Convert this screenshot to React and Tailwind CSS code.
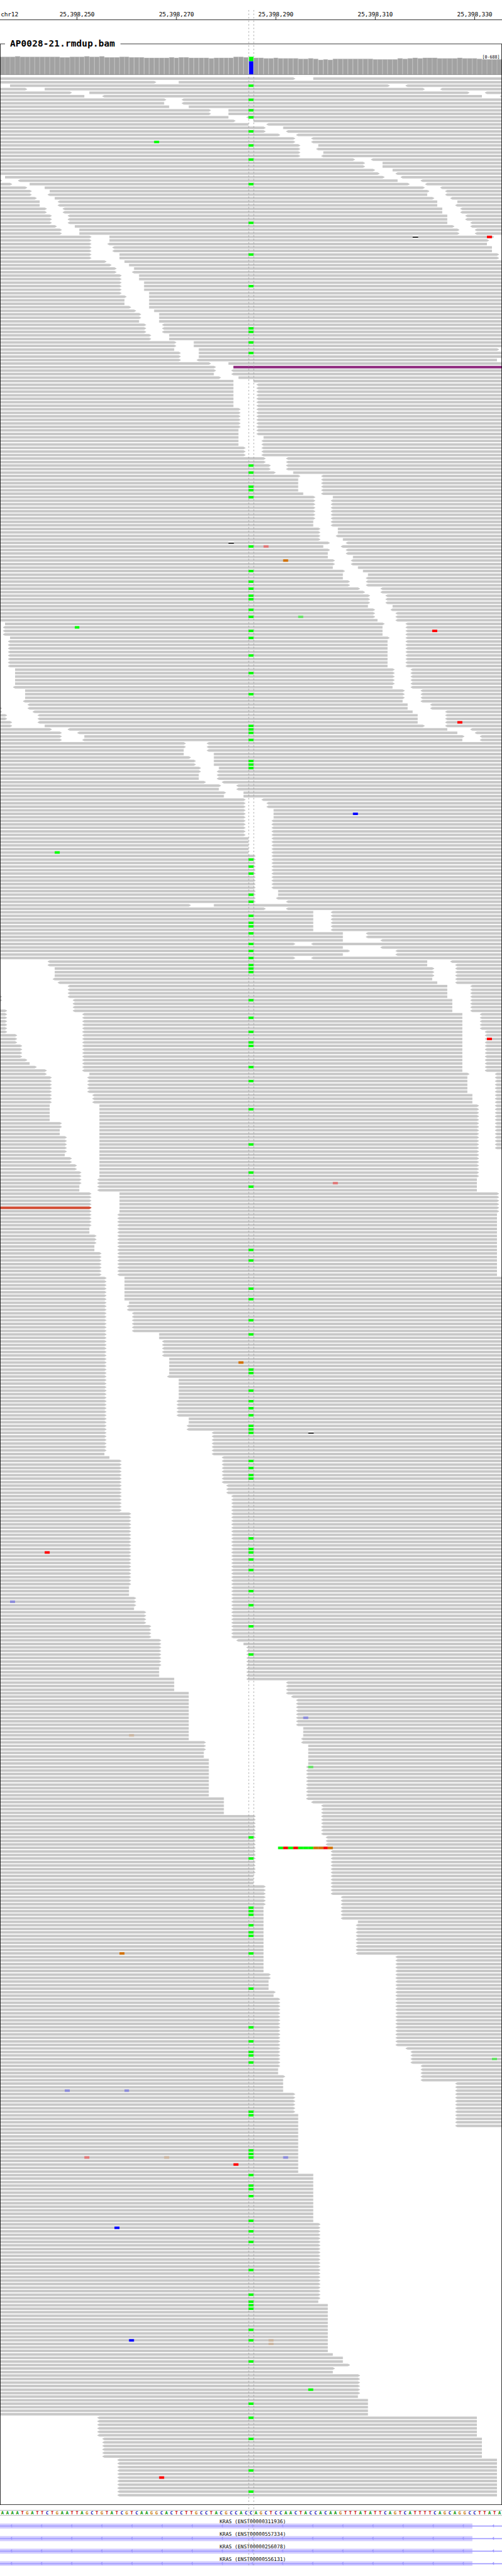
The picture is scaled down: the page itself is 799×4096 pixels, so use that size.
import React from "react";

/* The view is laid out in genome-viewer units: 1000 wide, 101 bases across. */
const VIEW_W = 1000;
const UNIT = 0.799;
const BASES = 101;
const edge = (base) => Math.round((base * VIEW_W) / BASES);

const GREY = "#c8c8c8";
const GREEN = "#00ff00";
const RED = "#ff0000";
const BLUE = "#0000ff";
const ORANGE = "#d17105";
const FAINT_RED = "#e07878";
const FAINT_GREEN = "#64e364";
const FAINT_BLUE = "#8c8cdb";
const FAINT_ORANGE = "#cab5a1";

/* Each line: gaps of a row (base, ">" = forward tip, "<" = reverse tip), and how many rows repeat it. */
const ROWS = `
59>-63
31>-36
0-2 78>-<82
5>-9 85>-<89
14>-18 94>-<98
17-<21 97-<101
33>-<37
33-<37
34-38
42>-46|2
46-<50
47>-51
50-<54
53>-57
53>-<58
56>-<60
59>-<63|2
60>-64
60>-<64
60>-65
60>-<65
71>-<75
73>-77|2
75>-79
76>-<80
0-1 77>-<81
0>-<4 80-<85
2>-6 82>-<86
5>-9 85>-<89
6>-10 86>-<90
6>-<10 86-<90
7>-11 87>-<91
8-<12 88-92
8-<12 88-<92
9>-<13 89-<93|2
10>-<14 90-<94|2
10>-<14 90-<95
11>-15 91>-<95
12>-16 92>-<96|2
18>-22 99>-101
18>-22 98>-101
18>-<22 98-101
18>-<23 99-101|2
18>-24 100>-101|2
21>-25
22>-26
23>-27
23>-<27
24>-28|2
24>-29|3
24>-30
25>-30
25-30|2
26>-30
27>-31
28>-32|2
28-32
29>-<33|3
30>-34|2
35>-39|2
35-40 100>-101
36>-40|2
36>-<40 100-101
42>-46
43>-47
43>-<47
43-<47
44>-48
47-51
47-<52|7
48>-<52|6
48-<52|2
48-53
48-<53|2
49>-<53|3
53>-<58|2
54>-<58|2
55>-59
60>-<65
60-<65|4
61-<65
63>-67
63>-<67|6
63-<67|2
64>-68|2
64>-<68
64>-69
66>-<70
65-<69
66>-<70
66-<70
66-71
67>-<71|2
67-72
69>-73
69-74
69-<74
70>-<74|2
72>-<77
73>-<77
74>-<78|3
74-79
75>-<79
75>-<80|2
76-<80
0-1 77>-<82
0-<1 77-<82|3
0-2 78>-<82
0-<2 78-<82|8
0-3 79>-<83|5
0-<3 79-<83
0-5 81>-<85|3
0-<5 81-<85
0-<6 82-<87
0>-<6 82-<87
0>-<7 83-<90
1>-<8 84-<90|2
2>-<8 84-<90
2>-9 85>-<90
10>-<14 90-<95
12>-<16 92-<96
12>-17 93>-<97
12>-<17 93-<97
37>-<42|2
37-<42
37-43
38>-43
39>-43|2
40>-44
40>-<44
40-<44|2
41>-<45
44>-<48
44-<48
45>-49
45-49
49>-<53
49>-<54|2
49>-55|3
49>-<55|5
50-<55|5
51>-<55|10
51>-56|2
51>-<56
51>-<58
38>-43
53>-<58
63-<67|6
69-<74|2
69-<77
59>-<63
69-<77
70>-<80
69-<80
59>-<63
0-<10 86-<91
0-<10 86-<92
0-11 87>-<92|3
0-<11 87-<92
0-<12 88-<92
0-<14 90-<95|3
0>-<14 90-<95
0>-<15 91-<95
0-<15 91-<95|2
1>-<15 91-<95
1>-<17 93-<97|5
1>-<17 93-<98
3>-<17 93-<98|3
4>-<17 93-<98|4
5>-<17 93-<98
6-<17 93-<98
7>-<17 93-<98
9>-<17 93-<98
9>-18 94>-<100
10>-<18 94-<100|5
10>-<19 95-<100|3
10-20 96>-<100|5
12>-20 96>-<100|2
12-20 96>-<100|2
13>-20 96>-<100|4
13>-20 96>-101
13-20 96>-101
14>-20 96>-101|2
15>-20 96>-101|2
16>-20 96>-101|2
16>-<20 96-101|2
16-<20 96-101|2
18>-24 100>-101|6
18>-<24 100-101|4
18-<24 100-101|2
19>-<24 100-101|3
19-<24 100-101|2
20>-<24 100-101|7
21>-25|7
21>-26
21>-<26|2
21>-<27|6
21>-32|2
21>-<33|5
21>-34|5
21>-<34
21>-36|6
21>-<36|5
21>-38|2
21>-<38|2
21>-<43|6
21-<43
22-<45
24>-<45|7
24>-<46|3
24>-<47|5
26>-<47|21
26-<47|3
27>-<47|3
27-<47
29>-<47|4
30>-<47|4
32>-<48
32>-49
32>-<50|6
32-<50|3
35-<50
35-<58|3
38-<58
38-<59
38-<60|8
38-61|3
38-<61
41>-<61
41>-62|2
41-62|2
42-62|2
42-<62|9
45-<62
45-<63
45-<65|3
51>-<65|6
51>-<66|3
51>-56
51>-<67|7
51-<67|3
53>-<67|3
53>-<69|3
53-<69|4
53-72
53-<72|9
53-<80|5
54>-<80|2
54-<80|3
55>-<80
55-<80
56>-<80|14
56>-<82
56>-<83|4
56>-<85
56-<85|2
57>-<85
57-<85
57-<92|3
59>-<92|6
60-<92|4
60-101|13
63-101|14
64>-101|22
64-101
66-101|14
67-101
69-101|2
70>-101
67>-101
67-101
72>-101|6
72-101
74-101|5
0-<20 96-101|6
0-<21 97-101|6
0-<24 100-101|11
`
  .trim()
  .split("\n")
  .flatMap((line) => {
    const [gaps, n] = line.split("|");
    return Array(Number(n || 1)).fill(gaps);
  });

/* Rows carrying the variant at the centre base. */
const VARIANT_ROWS = [
  2, 6, 9, 11, 15, 19, 23, 30, 41, 50, 59, 71, 72, 75, 78, 110, 112, 116, 117, 119, 133, 140, 143, 145, 147, 148,
  151, 153, 157, 159, 164, 169, 175, 184, 185, 186, 188, 194, 195, 196, 222, 224, 226, 232, 234, 238, 240, 241, 243,
  246, 248, 250, 252, 253, 254, 262, 267, 271, 274, 275, 281, 285, 293, 303, 311, 315, 333, 336, 344, 347, 353, 357,
  367, 368, 373, 376, 378, 380, 383, 384, 385, 393, 395, 397, 398, 415, 418, 419, 421, 424, 430, 434, 440, 448, 500,
  506, 520, 521, 522, 525, 527, 528, 533, 543, 554, 558, 561, 562, 564, 578, 579, 589, 590, 591, 596, 599, 600, 602,
  609, 612, 615, 623, 630, 632, 633, 634, 640, 643, 649, 661, 665, 671, 680, 686,
];

/* [row, base, colour] */
const MISMATCHES = [
  [18, 31, GREEN], [45, 98, RED], [133, 53, FAINT_RED], [137, 57, ORANGE], [153, 60, FAINT_GREEN], [156, 15, GREEN],
  [157, 87, RED], [183, 92, RED], [209, 71, BLUE], [220, 11, GREEN], [273, 98, RED], [314, 67, FAINT_RED],
  [365, 48, ORANGE], [419, 9, RED], [433, 2, FAINT_BLUE], [466, 61, FAINT_BLUE], [471, 26, FAINT_ORANGE],
  [480, 62, FAINT_GREEN], [503, 56, GREEN], [503, 57, RED], [503, 58, GREEN], [503, 59, RED], [503, 60, GREEN],
  [503, 61, GREEN], [503, 62, GREEN], [503, 63, ORANGE], [503, 64, ORANGE], [503, 65, RED], [503, 66, ORANGE],
  [533, 24, ORANGE], [563, 99, FAINT_GREEN], [572, 13, FAINT_BLUE], [572, 25, FAINT_BLUE], [591, 17, FAINT_RED],
  [591, 33, FAINT_ORANGE], [591, 57, FAINT_BLUE], [593, 47, RED], [611, 23, BLUE], [643, 26, BLUE],
  [643, 54, FAINT_ORANGE], [644, 54, FAINT_ORANGE], [657, 62, GREEN], [682, 32, RED],
];

const DELETIONS = [[45, 83], [132, 46], [385, 62]];

/* [row, index of the read within its row, colour] */
const TINTED = [[82, 1, "#8f2a7f"], [321, 0, "#d44d35"]];

/* Top of every coverage column: [columns, y] */
const COVERAGE = [
  [3, 113], [1, 112], [8, 113], [2, 114], [3, 113], [1, 112], [2, 113], [1, 112], [3, 114], [2, 113], [3, 114],
  [5, 115], [1, 114], [1, 115], [2, 114], [4, 115], [1, 116], [4, 115], [2, 113], [1, 114], [1, 113], [2, 115],
  [2, 116], [1, 115], [4, 116], [2, 117], [1, 116], [1, 117], [1, 119], [1, 118], [1, 119], [8, 117], [5, 118],
  [1, 116], [1, 117], [1, 116], [1, 115], [1, 116], [3, 115], [4, 116], [1, 115], [3, 116], [1, 117], [4, 118],
].flatMap(([n, y]) => Array(n).fill(y));

const SEQUENCE =
  "AAAATGATTCTGAATTAGCTGTATCGTCAAGGCACTCTTGCCTACGCCACCAGCTCCAACTACCACAAGTTTATATTCAGTCATTTTCAGCAGGCCTTATA";
const BASE_COLOURS = { A: "#009600", C: "#0000b4", G: "#c87800", T: "#c80000" };

const TRANSCRIPTS = ["ENST00000311936", "ENST00000557334", "ENST00000256078", "ENST00000556131"];

const ROW_TOP = 154;
const ROW_PITCH = 7;
const rowY = (row) => ROW_TOP + row * ROW_PITCH;

function readsOf(gaps) {
  const reads = [];
  let start = { base: 0, tip: false };
  const close = (base, tip) => {
    if (base > start.base || tip || start.tip) reads.push({ from: start, to: { base, tip } });
  };
  gaps.split(" ").forEach((gap) => {
    const [, a, fwd, rev, b] = gap.match(/^(\d+)(>?)-(<?)(\d+)$/);
    close(Number(a), fwd === ">");
    start = { base: Number(b), tip: rev === "<" };
  });
  close(BASES, false);
  return reads;
}

function readPath({ from, to }, y) {
  const x1 = edge(from.base);
  const x2 = edge(to.base);
  const left = from.tip ? `L${x1} ${y + 5}L${x1 - 4} ${y + 3}V${y + 2}Z` : `L${x1} ${y + 5}Z`;
  const right = to.tip ? `L${x2} ${y}L${x2 + 4} ${y + 2}V${y + 3}L${x2} ${y + 5}` : `L${x2} ${y}V${y + 5}`;
  return `M${x1} ${y}${right}${left}`;
}

/* One horizontal band of the page; its drawing uses page units. */
function Track({ top, height, children }) {
  return (
    <svg
      className="block w-full shrink-0"
      style={{ height }}
      viewBox={`0 ${top / UNIT} ${VIEW_W} ${height / UNIT}`}
      preserveAspectRatio="none"
    >
      {children}
    </svg>
  );
}

function Ruler() {
  return (
    <Track top={0} height={56}>
      <g className="font-['DejaVu_Sans_Mono',monospace] text-[12px]" fill="#000">
        <text x="1.5" y="32" textLength="35">chr12</text>
        {[250, 270, 290, 310, 330].map((n, i) => (
          <text key={n} x={118.5 + i * 198.02} y="32" textLength="70">{`25,398,${n}`}</text>
        ))}
      </g>
      {[0, 1, 2, 3, 4].map((i) => (
        <rect key={i} x={Math.floor(153.5 + i * 198.02)} y="32" width="1" height="7" />
      ))}
      <rect x="0" y="39" width="1000" height="1" />
    </Track>
  );
}

function Coverage() {
  return (
    <g>
      {COVERAGE.map((y, i) => {
        const x = edge(i);
        const w = edge(i + 1) - x;
        if (i === 50) {
          return (
            <g key={i}>
              <rect x={x} y={y} width={w} height={148 - y} fill="#e4e4e4" />
              <rect x={x + 1} y={y} width={w - 1} height={122 - y} fill={GREEN} />
              <rect x={x + 1} y="122" width={w - 1} height="26" fill={BLUE} />
            </g>
          );
        }
        return (
          <g key={i}>
            <rect x={x} y={y} width={w} height={148 - y} fill="#b2b2b2" />
            <rect x={x + 1} y={y + 1} width={w - 2} height={147 - y} fill="#a2a2a2" />
          </g>
        );
      })}
      <rect x="0" y="148" width="1000" height="1" fill="#777" />
      <text className="font-['DejaVu_Sans_Mono',monospace] text-[9px]" x="960.5" y="117" textLength="35" lengthAdjust="spacingAndGlyphs">
        [0-688]
      </text>
    </g>
  );
}

function Alignments() {
  const parsed = ROWS.map(readsOf);
  const grey = parsed.map((reads, row) => reads.map((r) => readPath(r, rowY(row))).join("")).join("");
  const square = (base) => ({ x: edge(base), width: edge(base + 1) - edge(base) });
  return (
    <g>
      <path d={grey} fill={GREY} />
      {TINTED.map(([row, i, colour]) => (
        <path key={row} d={readPath(parsed[row][i], rowY(row))} fill={colour} />
      ))}
      {VARIANT_ROWS.map((row) => (
        <rect key={row} {...square(50)} y={rowY(row)} height="5" fill={GREEN} />
      ))}
      {MISMATCHES.map(([row, base, colour]) => (
        <rect key={`${row}-${base}`} {...square(base)} y={rowY(row)} height="5" fill={colour} />
      ))}
      {DELETIONS.map(([row, base]) => (
        <g key={row}>
          <rect x={edge(base)} y={rowY(row)} width="11" height="5" fill="#fff" />
          <rect x={edge(base)} y={rowY(row) + 2} width="11" height="2" fill="#000" />
        </g>
      ))}
    </g>
  );
}

function AlignmentPanel() {
  return (
    <Track top={56} height={3932}>
      <Coverage />
      <Alignments />
      <path d="M0 87H10V88H1V4984H999V88H240V87H1000V4985H0Z" fill="#000" />
      <text className="font-['DejaVu_Sans_Mono',monospace] text-[18px] font-bold" x="20" y="92" textLength="209">
        AP0028-21.rmdup.bam
      </text>
    </Track>
  );
}

function Sequence() {
  return (
    <Track top={3988} height={14}>
      <rect x="0" y="4995" width="1000" height="1" fill="#aaa" />
      <rect x="0" y="5005" width="1000" height="1" fill="#aaa" />
      <g className="font-['DejaVu_Sans_Mono',monospace] text-[9px] font-bold" textAnchor="middle">
        {[...SEQUENCE].map((base, i) => (
          <text key={i} x={((i + 0.5) * VIEW_W) / BASES} y="5004" fill={BASE_COLOURS[base]}>
            {base}
          </text>
        ))}
      </g>
    </Track>
  );
}

function Transcripts() {
  return (
    <Track top={4002} height={94}>
      {TRANSCRIPTS.map((id, i) => {
        const y = 5022 + i * 25;
        return (
          <g key={id}>
            <rect x="0" y={y} width="941" height={i === 3 ? 9 : 10} fill="#d2ccff" />
            <rect x="0" y={y + 4} width="1000" height="2" fill="#9c96ff" />
            {Array.from({ length: 17 }, (_, k) => (
              <path key={k} d={`M${20.5 + k * 60} ${y + 4.5}l3.5 -3.5v7z`} fill="#9c96ff" />
            ))}
            <text className="font-['DejaVu_Sans_Mono',monospace] text-[10px]" x="437.5" y={y - 1} textLength="132">
              {`KRAS (${id})`}
            </text>
          </g>
        );
      })}
    </Track>
  );
}

/* Dashed guides round the centre base, above every track but the coverage plot. */
function CentreGuides() {
  const dashes = (x) => `M${x} 20V113M${x} 153V5105`;
  return (
    <svg
      className="pointer-events-none absolute inset-0 h-full w-full"
      viewBox={`0 0 ${VIEW_W} ${4096 / UNIT}`}
      preserveAspectRatio="none"
    >
      <path d={dashes(495.5) + dashes(505.5)} stroke="#969696" strokeWidth="1" strokeDasharray="3 4" fill="none" />
    </svg>
  );
}

export default function App() {
  return (
    <main className="relative flex h-[4096px] w-[799px] flex-col overflow-hidden bg-white">
      <Ruler />
      <AlignmentPanel />
      <Sequence />
      <Transcripts />
      <CentreGuides />
    </main>
  );
}
